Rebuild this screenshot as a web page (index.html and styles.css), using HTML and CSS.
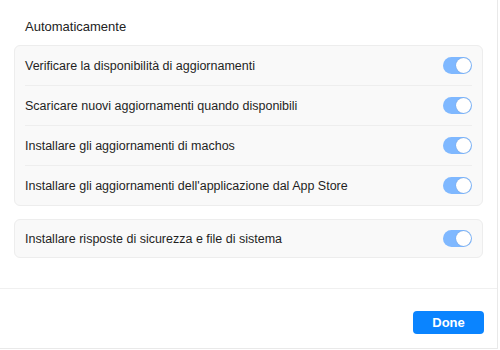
FILE: index.html
```html
<!DOCTYPE html>
<html lang="it">
<head>
    <meta charset="UTF-8">
    <meta name="viewport" content="width=device-width, initial-scale=1.0">
    <title>Aggiornamenti automatici</title>
    <link rel="stylesheet" href="styles.css">
</head>
<body>
    <div class="window">
        <div class="content">
            <h2 class="section-title">Automaticamente</h2>

            <div class="card">
                <div class="row">
                    <span class="label">Verificare la disponibilità di aggiornamenti</span>
                    <span class="toggle on"><span class="knob"></span></span>
                </div>
                <div class="row">
                    <span class="label">Scaricare nuovi aggiornamenti quando disponibili</span>
                    <span class="toggle on"><span class="knob"></span></span>
                </div>
                <div class="row">
                    <span class="label">Installare gli aggiornamenti di machos</span>
                    <span class="toggle on"><span class="knob"></span></span>
                </div>
                <div class="row">
                    <span class="label">Installare gli aggiornamenti dell'applicazione dal App Store</span>
                    <span class="toggle on"><span class="knob"></span></span>
                </div>
            </div>

            <div class="card single">
                <div class="row">
                    <span class="label">Installare risposte di sicurezza e file di sistema</span>
                    <span class="toggle on"><span class="knob"></span></span>
                </div>
            </div>
        </div>

        <div class="footer">
            <button class="btn-primary" type="button">Done</button>
        </div>
    </div>
</body>
</html>
```

FILE: styles.css
```css
body {
    margin: 0;
    background-color: #fff;
    font-family: "Liberation Sans", Arial, sans-serif;
    color: #1d1d1f;
}

.window {
    width: 497px;
    height: 348px;
    border-right: 1px solid #e9e9e9;
    border-bottom: 1px solid #e9e9e9;
    display: flex;
    flex-direction: column;
}

.content {
    height: 289px;
    border-bottom: 1px solid #f0f0f0;
    box-sizing: border-box;
}

.section-title {
    margin: 0 0 9px 25px;
    padding-top: 18px;
    font-size: 13px;
    font-weight: normal;
    line-height: 18px;
    color: #222;
}

.card {
    margin: 0 0 13px 14px;
    width: 469px;
    box-sizing: border-box;
    background-color: #f9f9f9;
    border: 1px solid #ededed;
    border-radius: 6px;
}

.row {
    display: flex;
    align-items: center;
    justify-content: space-between;
    height: 39px;
    margin: 0 10px;
    border-bottom: 1px solid #eeeeee;
}

.row:last-child {
    border-bottom: none;
}

.single .row {
    height: 37px;
}

.label {
    font-size: 12.5px;
    color: #1f1f1f;
}

.toggle {
    position: relative;
    width: 29px;
    height: 17px;
    border-radius: 9px;
    background-color: #7fb8ff;
}

.toggle .knob {
    position: absolute;
    top: 1px;
    right: 1px;
    width: 15px;
    height: 15px;
    border-radius: 50%;
    background-color: #fff;
    box-shadow: 0 0 1px rgba(0, 0, 0, 0.25);
}

.footer {
    flex: 1;
    display: flex;
    justify-content: flex-end;
    align-items: flex-start;
    padding: 22px 13px 0 0;
}

.btn-primary {
    width: 71px;
    height: 23px;
    border: none;
    border-radius: 4px;
    background-color: #0a84ff;
    color: #fff;
    font-family: "Liberation Sans", Arial, sans-serif;
    font-size: 13px;
    font-weight: bold;
    padding: 0;
}
```
